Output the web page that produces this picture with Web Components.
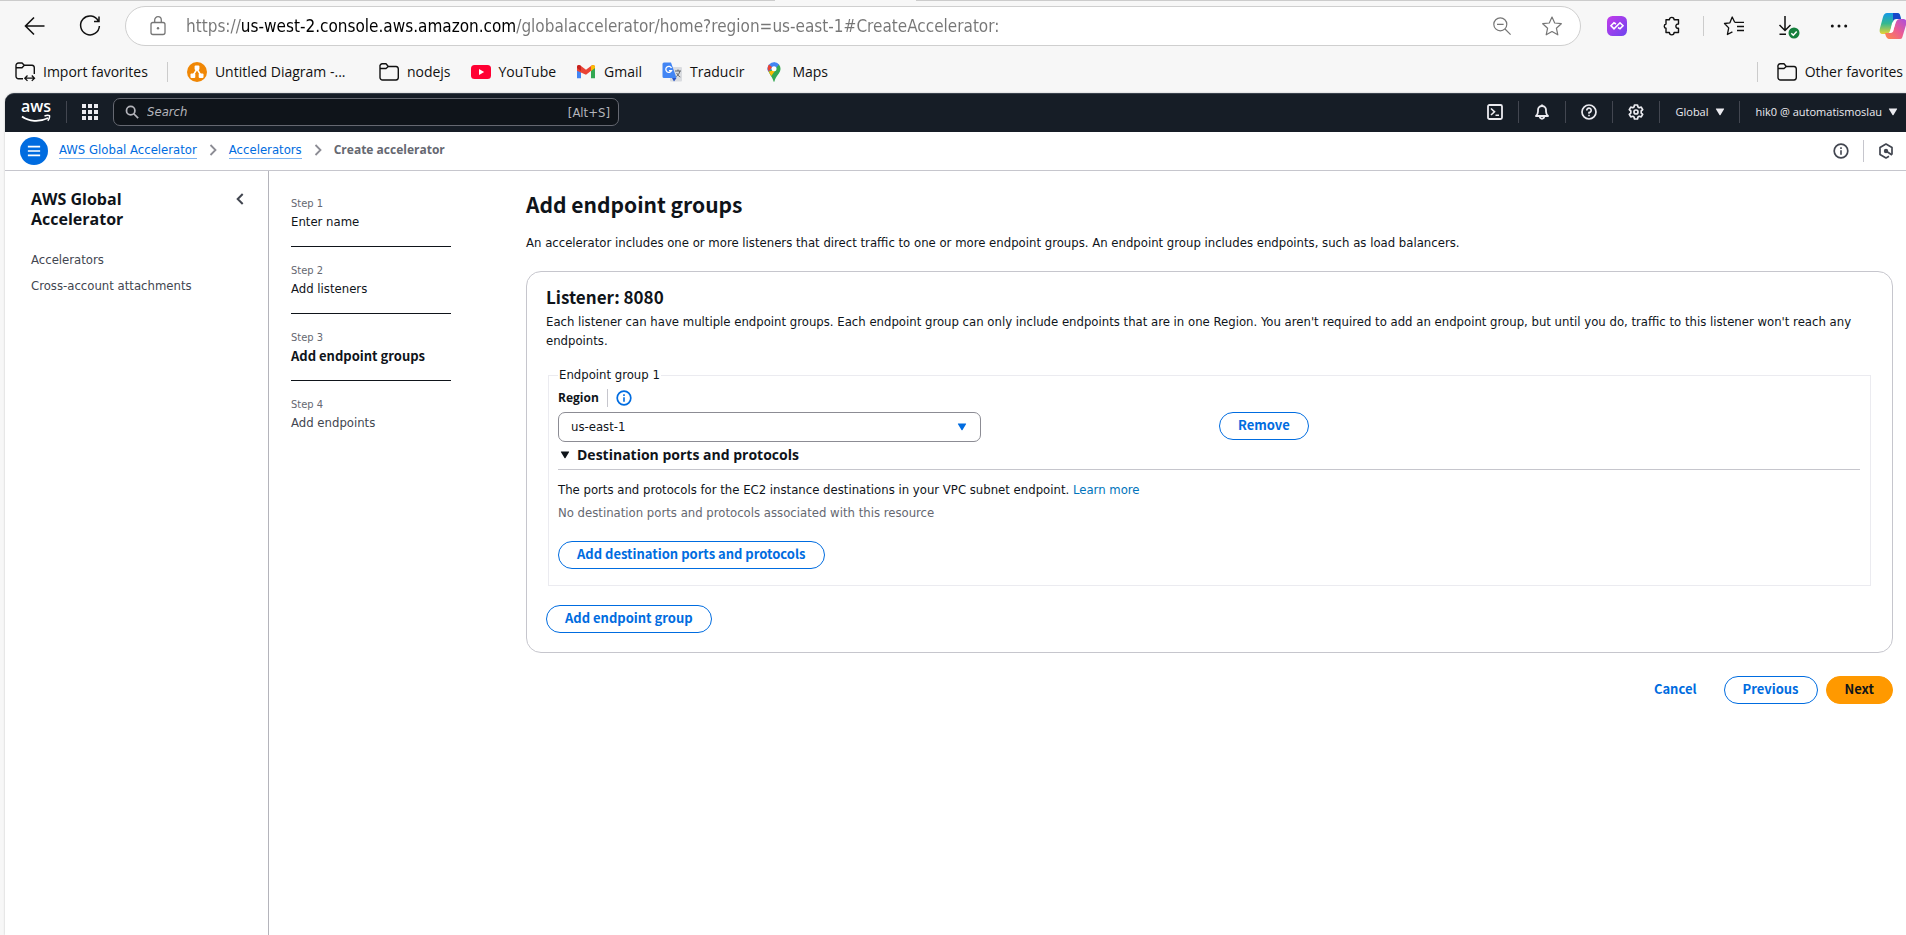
<!DOCTYPE html>
<html lang="en">
<head>
<meta charset="utf-8">
<title>Create accelerator</title>
<style>
  :root {
    --body: "DejaVu Sans Condensed", "Open Sans", sans-serif;
    --bold: "Noto Sans CJK SC", "Open Sans", sans-serif;
    --shell: "Open Sans", "Noto Sans", sans-serif;
    --ink: #0f141a;
    --muted: #656871;
    --soft: #424650;
    --link: #006ce0;
    --line: #c6c6cd;
  }
  html, body { margin: 0; height: 100%; }
  body { background: #f7f7f7; color: var(--ink); font: 13px/19px var(--body); overflow: hidden; }
</style>
</head>
<body>
<aws-app></aws-app>
<script>
const ICONS = {
  back: [24, '<path d="M21.500 12H2.500M11 3.500 2.500 12l8.500 8.500" fill="none" stroke="currentColor" stroke-width="1.600"/>'],
  reload: [24, '<path d="M20.300 7A9.400 9.400 0 1 0 21.400 12M21 2.500V7.500H16" fill="none" stroke="currentColor" stroke-width="1.500"/>'],
  lock: [20, '<rect x="3" y="6.500" width="14" height="12" rx="2" fill="none" stroke="currentColor" stroke-width="1.300"/><path d="M6.700 6.500V4a3.300 3.300 0 0 1 6.600 0v2.500" fill="none" stroke="currentColor" stroke-width="1.300"/><circle cx="10" cy="12.300" r="1.200" fill="currentColor"/>'],
  zoomout: [20, '<circle cx="8.300" cy="8.300" r="6.500" fill="none" stroke="currentColor" stroke-width="1.200"/><path d="M13 13l5.600 5.600M5 8.300h6.600" stroke="currentColor" stroke-width="1.200"/>'],
  star: [20, '<path d="M10 1l2.700 6 6.600.7-4.900 4.500 1.400 6.600L10 15.500l-5.800 3.300 1.400-6.600L.7 7.700 7.300 7z" fill="none" stroke="currentColor" stroke-width="1.200" stroke-linejoin="round"/>'],
  starlist: [20, '<path d="M10.700 6.300 8.200 1 5.900 6.800.5 7.500l4.200 4.400-1.300 6.600 5-2.600M10.700 6.300H20M13 10.500h7M13 14.500h7" fill="none" stroke="currentColor" stroke-width="1.300" stroke-linejoin="round"/>'],
  ext: [20, '<defs><linearGradient id="p" x1="0" y1="0" x2="1" y2="1"><stop offset="0" stop-color="#c43bea"/><stop offset="1" stop-color="#6d45ef"/></linearGradient></defs><rect width="20" height="20" rx="5.500" fill="url(#p)"/><path d="M9 8 7 6.800 4 9.800 7 12.800 13 6.800 16 9.800 13 12.800 11 11.500" fill="none" stroke="#fff" stroke-width="1.600"/>'],
  puzzle: [20, '<path d="M4 3.700h3.400a2.300 2.300 0 0 1 4.700 0H16.500V8c-3.200-.6-3.800 4.600 0 4.300v4.200h-4.400a2.300 2.300 0 0 1-4.700 0H4v-4.200a2.200 2.200 0 0 1 0-4.300z" fill="none" stroke="currentColor" stroke-width="1.400" stroke-linejoin="round"/>'],
  download: [24, '<path d="M9 2v14.500M3.500 11 9 16.500l5.500-5.500M3.500 20.300H10" fill="none" stroke="currentColor" stroke-width="1.500"/><circle cx="18" cy="19" r="5.500" fill="#15803d"/><path d="m15.300 19.200 2 2 3.400-3.800" fill="none" stroke="#fff" stroke-width="1.500"/>'],
  dots: [20, '<g fill="currentColor"><circle cx="3.300" cy="10" r="1.500"/><circle cx="10" cy="10" r="1.500"/><circle cx="16.700" cy="10" r="1.500"/></g>'],
  copilot: [28, '<defs><linearGradient id="a" x1="0" y1="0" x2="0" y2="1"><stop offset="0" stop-color="#1398e8"/><stop offset=".5" stop-color="#35b890"/><stop offset="1" stop-color="#e9d335"/></linearGradient><linearGradient id="b" x1="1" y1="0" x2="0" y2="1"><stop offset="0" stop-color="#a94de0"/><stop offset=".5" stop-color="#ec5d92"/><stop offset="1" stop-color="#ff8a45"/></linearGradient></defs><path d="M8 1h10c3 0 3 2 4 6h-5c-3 0-3 3-4 6l-2 6c-1 2-2 3-4 3H4c-3 0-4-2-3-6l3-11c1-3 2-4 4-4z" fill="url(#a)"/><path d="M14 1h4c3 0 3 2 4 6h-5c-2 0-3 1-3 3z" fill="#1747c9"/><path d="M21 27H11c-3 0-4-2-5-6h5c2 0 3-1 4-5l2-6c1-2 2-3 4-3h3c3 0 4 2 3 6l-3 10c-1 3-1 4-3 4z" fill="url(#b)"/><path d="m13 11 4-3-3 12-3 1z" fill="#fff"/>'],
  folder: [20, '<path d="M1 5A2.500 2.500 0 0 1 3.500 1.800H7L9.300 4.500H17A2.500 2.500 0 0 1 19.300 7V15.500A2.500 2.500 0 0 1 17 18H3.500A2.500 2.500 0 0 1 1 15.500zM1 6.500H7L9.300 4.500" fill="none" stroke="currentColor" stroke-width="1.400" stroke-linejoin="round"/>'],
  importfolder: [20, '<path d="M8 16.700H3.500A2.500 2.500 0 0 1 1 14.200V3.500A2.500 2.500 0 0 1 3.500 1H7L9.300 3.300H17A2.500 2.500 0 0 1 19.300 5.800V12M1 5.700H7L9.300 3.300" fill="none" stroke="currentColor" stroke-width="1.400"/><path d="M10 16.200h9.300M12.500 13.500 9.800 16.200l2.700 2.700M16.800 13.500l2.700 2.700-2.700 2.700" fill="none" stroke="currentColor" stroke-width="1.300"/>'],
  drawio: [20, '<circle cx="10" cy="10" r="10" fill="#f08705"/><path d="M10 7 6.300 13M10 7l3.700 6" stroke="#fff" stroke-width="1.500"/><g fill="#fff"><rect x="7.600" y="3.500" width="4.800" height="4.500" rx="1"/><rect x="3.500" y="11.500" width="4.800" height="4.500" rx="1"/><rect x="11.700" y="11.500" width="4.800" height="4.500" rx="1"/></g>'],
  youtube: [20, '<rect y="3" width="20" height="14" rx="3.500" fill="#f03"/><path d="m8 7 5.200 3L8 13z" fill="#fff"/>'],
  gmail: [20, '<path d="M1 5v11.200h4V8z" fill="#4285f4"/><path d="M15 8v8.200h4V5z" fill="#34a853"/><path d="M1 8.800V5c0-2 2-2.600 3.400-1.500L10 7.700l5.600-4.200C17 2.400 19 3 19 5v.8l-9 6.900z" fill="#ea4335"/><path d="M15 9V4l.6-.5C17 2.400 19 3 19 5v.9z" fill="#fbbc04"/><path d="M1 5.900 5 9V4C3 2 1 3 1 5z" fill="#c5221f"/>'],
  translate: [20, '<rect x="8" y="5" width="12" height="14.500" rx="1" fill="#dadce0"/><path d="M2 .5h7L14.500 16H2A1.500 1.500 0 0 1 .5 14.500V2A1.500 1.500 0 0 1 2 .5z" fill="#4285f4"/><path d="M10 16h4.500L12 19.500z" fill="#2a56c6"/><path d="M9.500 6A3 3 0 1 0 9.500 8.700H7" fill="none" stroke="#fff" stroke-width="1.300"/><path d="M13 9h6M16 7.500V9M17.800 9c-.5 3-2 4.500-3.500 5.500M14.700 11c.8 2 2 3 3.600 4" fill="none" stroke="#5f6368"/>'],
  maps: [20, '<path d="M10 .3a6.500 6.500 0 0 1 5 2.300L6.700 12C4 9.500 3.300 8 3.300 6.700A6.700 6.700 0 0 1 10 .3z" fill="#4285f4"/><path d="M4.900 2.500 8.200 5.200 4.600 9.400A6.500 6.500 0 0 1 4.900 2.500z" fill="#ea4335"/><path d="M4.600 9.400 15 2.600c2.200 3 2 6-.2 9C12.300 14.700 11 17 10.500 19.300c-.2.700-.8.700-1 0-.8-3.800-3-5.300-4.900-9.900z" fill="#34a853"/><path d="m4.600 9.400 7-1.400-4.300 6z" fill="#fbbc04"/><path d="m10 .3 5 2.300-4 4.600-3-2z" fill="#4285f4"/><circle cx="10" cy="6.700" r="2.500" fill="#fff"/>'],
  grid: [16, '<path d="M0 0h4v4H0zM6 0h4v4H6zM12 0h4v4h-4zM0 6h4v4H0zM6 6h4v4H6zM12 6h4v4h-4zM0 12h4v4H0zM6 12h4v4H6zM12 12h4v4h-4z" fill="currentColor"/>'],
  search: [16, '<circle cx="6.500" cy="6.500" r="4.800" fill="none" stroke="currentColor" stroke-width="2"/><path d="m10 10 5 5" stroke="currentColor" stroke-width="2"/>'],
  terminal: [16, '<rect x="1" y="1" width="14" height="14" rx="1.500" fill="none" stroke="currentColor" stroke-width="1.800"/><path d="m4 4.500 3.500 3.300L4 11M8.500 11.300H12" fill="none" stroke="currentColor" stroke-width="1.600"/>'],
  bell: [16, '<path d="M2 12h12c-1.500-1.500-2-2.500-2-4.500V6A4 4 0 0 0 4 6v1.500C4 9.500 3.500 10.500 2 12zM8 2V.5M5.700 12.500c.3 3 4.300 3 4.600 0" fill="none" stroke="currentColor" stroke-width="1.800" stroke-linejoin="round"/>'],
  help: [16, '<circle cx="8" cy="8" r="7" fill="none" stroke="currentColor" stroke-width="1.700"/><path d="M5.800 6.500A2.200 2.200 0 1 1 8 8.500v1.200M8 10.700v1.600" fill="none" stroke="currentColor" stroke-width="1.600"/>'],
  gear: [16, '<path d="M6.500 1h3l.5 2 1.200.7 2-.6 1.500 2.600L13.200 7v2l1.500 1.300-1.500 2.600-2-.6-1.200.7-.5 2h-3L6 13l-1.200-.7-2 .6-1.500-2.600L2.800 9V7L1.300 5.700l1.500-2.600 2 .6L6 3z" fill="none" stroke="currentColor" stroke-width="1.700" stroke-linejoin="round"/><circle cx="8" cy="8" r="2" fill="none" stroke="currentColor" stroke-width="1.700"/>'],
  caret: [10, '<path d="M1.400 1.500h7.200c.5 0 .7.400.4.800L5.500 7.900c-.3.400-.7.400-1 0L1 2.300c-.3-.4-.1-.8.400-.8z" fill="currentColor"/>'],
  info: [16, '<circle cx="8" cy="8" r="6.800" fill="none" stroke="currentColor" stroke-width="1.700"/><path d="M8 7.200v4.600M8 4.200v1.700" stroke="currentColor" stroke-width="1.600"/>'],
  hex: [16, '<path d="M11 13.300 8 15l-6-3.500v-7L8 1l6 3.500v7" fill="none" stroke="currentColor" stroke-width="1.700" stroke-linejoin="round"/><circle cx="8" cy="8" r="2.200" fill="currentColor"/><path d="m8 8 6 4" stroke="currentColor" stroke-width="1.800"/>'],
  menu: [16, '<path d="M1 3h14M1 8h14M1 13h14" stroke="currentColor" stroke-width="1.800"/>'],
  right: [12, '<path d="m3.500 1 5 5-5 5" fill="none" stroke="currentColor" stroke-width="1.800"/>'],
  left: [12, '<path d="m8.700 1-5 5 5 5" fill="none" stroke="currentColor" stroke-width="2"/>']
};

function define(name, html, setup) {
  const template = document.createElement('template');
  template.innerHTML = html;
  customElements.define(name, class extends HTMLElement {
    connectedCallback() {
      if (this.shadowRoot) return;
      const root = this.attachShadow({ mode: 'open' });
      root.append(template.content.cloneNode(true));
      if (setup) setup(this, root);
    }
  });
}

define('ui-icon', `<style>:host{display:inline-flex;flex:none}svg{display:block;overflow:visible}</style>`, (el, root) => {
  const [box, art] = ICONS[el.getAttribute('name')];
  const size = el.getAttribute('size') || box;
  root.innerHTML += `<svg aria-hidden="true" width="${size}" height="${size}" viewBox="0 0 ${box} ${box}">${art}</svg>`;
});

define('icon-button', `<style>
  :host{display:inline-flex;flex:none}
  button{display:flex;align-items:center;justify-content:center;padding:0;border:0;background:none;color:inherit;width:100%}
  </style><button type="button"><slot></slot></button>`, (el, root) => {
  root.querySelector('button').setAttribute('aria-label', el.getAttribute('label'));
});

define('address-bar', `<style>
  :host{display:flex;align-items:center;flex:1;box-sizing:border-box;height:40px;border:1px solid #cfcfcf;border-radius:20px;background:#fff;padding:0 18px 0 22px;color:#767676}
  input{flex:1;min-width:0;border:0;outline:0;padding:0;margin-left:18px;height:32px;font:17px/32px var(--body);
    color:transparent;-webkit-background-clip:text;background-clip:text;
    background-image:linear-gradient(90deg,#767676 var(--from),#000 var(--from),#000 var(--to),#767676 var(--to))}
  .end{display:flex;gap:30px}
  </style>
  <ui-icon name="lock"></ui-icon>
  <input type="text" aria-label="Address" value="https://us-west-2.console.aws.amazon.com/globalaccelerator/home?region=us-east-1#CreateAccelerator:">
  <div class="end"><icon-button label="Zoom out"><ui-icon name="zoomout"></ui-icon></icon-button><icon-button label="Add to favorites"><ui-icon name="star"></ui-icon></icon-button></div>`, (el, root) => {
  const input = root.querySelector('input');
  const pen = document.createElement('canvas').getContext('2d');
  pen.font = '17px "DejaVu Sans Condensed", "Open Sans", sans-serif';
  const scheme = 'https://';
  const host = scheme + new URL(input.value).host;
  input.style.setProperty('--from', Math.round(pen.measureText(scheme).width) + 'px');
  input.style.setProperty('--to', Math.round(pen.measureText(host).width) + 'px');
});

define('bookmark-link', `<style>
  :host{display:inline-flex;flex:none}
  a{display:flex;align-items:center;gap:8px;color:#111;text-decoration:none;font:14px/20px var(--shell);white-space:nowrap}
  span{min-width:var(--label,0)}
  </style><a href="#"><span><slot></slot></span></a>`, (el, root) => {
  const icon = document.createElement('ui-icon');
  icon.setAttribute('name', el.getAttribute('icon'));
  root.querySelector('a').prepend(icon);
});

define('browser-chrome', `<style>
  :host{display:block;background:#f7f7f7;color:#111}
  .edge{display:flex;height:1px}
  .edge i{background:#ccc;width:775px}.edge i:last-child{flex:1}.edge b{width:141px}
  .bar{display:flex;align-items:center;height:50px;overflow:hidden}
  .start{display:flex;gap:31px;padding:0 23px 0 23px}
  .tools{display:flex;align-items:center;flex:none;padding-left:26px;margin-right:-1px}
  .rule{width:1px;height:20px;background:#ccc;flex:none}
  .favs{display:flex;align-items:center;height:42px;padding:0 3px 0 15px;gap:20px}
  .favs .rule{margin:0 -1px}
  .favs .push{margin-left:auto}
  .puzzle{margin:0 21px 0 35px}
  .favorites{margin:0 32px 0 20px}
  .more{margin:0 30px 0 29px}
  .wide{--label:144px}
  </style>
  <div class="edge"><i></i><b></b><i></i></div>
  <div class="bar">
    <div class="start"><icon-button label="Back"><ui-icon name="back"></ui-icon></icon-button><icon-button label="Refresh"><ui-icon name="reload"></ui-icon></icon-button></div>
    <address-bar></address-bar>
    <div class="tools">
      <icon-button label="Extension"><ui-icon name="ext"></ui-icon></icon-button>
      <icon-button class="puzzle" label="Extensions"><ui-icon name="puzzle"></ui-icon></icon-button>
      <span class="rule"></span>
      <icon-button class="favorites" label="Favorites"><ui-icon name="starlist"></ui-icon></icon-button>
      <icon-button label="Downloads"><ui-icon name="download"></ui-icon></icon-button>
      <icon-button class="more" label="Settings and more"><ui-icon name="dots"></ui-icon></icon-button>
      <icon-button label="Copilot"><ui-icon name="copilot"></ui-icon></icon-button>
    </div>
  </div>
  <div class="favs">
    <bookmark-link icon="importfolder">Import favorites</bookmark-link>
    <span class="rule"></span>
    <bookmark-link icon="drawio" class="wide">Untitled Diagram -...</bookmark-link>
    <bookmark-link icon="folder">nodejs</bookmark-link>
    <bookmark-link icon="youtube">YouTube</bookmark-link>
    <bookmark-link icon="gmail">Gmail</bookmark-link>
    <bookmark-link icon="translate">Traducir</bookmark-link>
    <bookmark-link icon="maps">Maps</bookmark-link>
    <span class="rule push"></span>
    <bookmark-link icon="folder">Other favorites</bookmark-link>
  </div>`);

define('aws-logo', `<style>
  :host{display:block;width:30px;color:#fff;font:600 16px/10px var(--shell);text-align:center}
  svg{display:block;margin-top:3px}
  </style>aws<svg width="30" height="9" viewBox="0 0 30 9" aria-hidden="true"><path d="M1 2.500c7 5 17 6 26 1.500" fill="none" stroke="currentColor" stroke-width="1.800"/><path d="M23.500 2c2-.8 4-.8 5-.3.300 1.500-.5 3.500-1.700 5" fill="none" stroke="currentColor" stroke-width="1.500"/></svg>`);

define('console-nav', `<style>
  :host{display:flex;align-items:center;box-sizing:border-box;height:39px;padding:0 8px 2px 16px;background:#161d26;border-top:1px solid #3a424d;border-top-left-radius:9px;color:#ebebf0}
  .rule{width:1px;height:22px;background:#424650;flex:none}
  .apps{margin:0 15px}
  .logo{margin-right:15px}
  label{display:flex;align-items:center;box-sizing:border-box;width:506px;height:28px;padding:0 8px 0 11px;gap:8px;border:1px solid #656871;border-radius:7px;background:#0f141a;color:#b4b4bb}
  input{flex:1;min-width:0;padding:0;border:0;outline:0;background:none;color:inherit;font:italic 13px/20px var(--body)}
  input::placeholder{color:#b4b4bb}
  .end{display:flex;align-items:center;margin-left:auto}
  .cell{width:46px}
  .menu{display:flex;align-items:center;gap:6px;padding:0;border:0;background:none;color:inherit;font:500 11px/16px var(--shell);margin-left:16px}
  .region{margin-right:14px}
  </style>
  <aws-logo class="logo"></aws-logo><span class="rule"></span>
  <icon-button class="apps" label="Services"><ui-icon name="grid"></ui-icon></icon-button>
  <label><ui-icon name="search" size="14"></ui-icon><input type="search" placeholder="Search" aria-label="Search">[Alt+S]</label>
  <div class="end">
    <icon-button class="cell" label="CloudShell"><ui-icon name="terminal"></ui-icon></icon-button><span class="rule"></span>
    <icon-button class="cell" label="Notifications"><ui-icon name="bell"></ui-icon></icon-button><span class="rule"></span>
    <icon-button class="cell" label="Help"><ui-icon name="help"></ui-icon></icon-button><span class="rule"></span>
    <icon-button class="cell" label="Settings"><ui-icon name="gear"></ui-icon></icon-button><span class="rule"></span>
    <button type="button" class="menu region">Global<ui-icon name="caret"></ui-icon></button><span class="rule"></span>
    <button type="button" class="menu">hik0 @ automatismoslau<ui-icon name="caret"></ui-icon></button>
  </div>`);

define('crumb-bar', `<style>
  :host{display:flex;align-items:center;box-sizing:border-box;height:39px;padding:0 12px 0 15px;background:#fff;border-bottom:1px solid var(--line);color:#424650}
  .menu{width:28px;height:28px;border-radius:50%;background:var(--link);color:#fff;margin-right:11px;justify-content:center}
  nav{display:flex;align-items:center;gap:10px;padding-bottom:2px;color:#8c8c94}
  a{color:var(--link);text-decoration:none;border-bottom:1px solid #7db4f0;line-height:16px}
  b{font:700 12px/18px var(--shell);color:var(--muted)}
  .end{display:flex;align-items:center;gap:14px;margin-left:auto}
  .rule{width:1px;height:22px;background:var(--line)}
  </style>
  <icon-button class="menu" label="Open navigation"><ui-icon name="menu" size="14"></ui-icon></icon-button>
  <nav aria-label="Breadcrumbs"><a href="#">AWS Global Accelerator</a><ui-icon name="right"></ui-icon><a href="#">Accelerators</a><ui-icon name="right"></ui-icon><b>Create accelerator</b></nav>
  <div class="end"><icon-button label="Info"><ui-icon name="info"></ui-icon></icon-button><span class="rule"></span><icon-button label="Amazon Q"><ui-icon name="hex"></ui-icon></icon-button></div>`);

define('side-nav', `<style>
  :host{display:block;box-sizing:border-box;flex:0 0 264px;border-right:1px solid #b4b4bb;padding:18px 22px 0 26px}
  header{display:flex;justify-content:space-between;color:#424650}
  header icon-button{height:20px}
  h2{margin:0;width:140px;font:700 16px/20px var(--shell);color:var(--ink)}
  a{display:block;color:var(--soft);text-decoration:none;line-height:18px}
  nav{display:grid;gap:8px;margin-top:22px}
  </style>
  <header><h2>AWS Global Accelerator</h2><icon-button label="Close navigation"><ui-icon name="left"></ui-icon></icon-button></header>
  <nav><a href="#">Accelerators</a><a href="#">Cross-account attachments</a></nav>`);

define('wizard-step', `<style>
  :host{display:block;border-bottom:1px solid var(--ink);padding-bottom:15px}
  :host(:last-child){border:0;color:var(--soft)}
  :host([current]) div{font:700 13px/18px var(--bold)}
  small{display:block;font-size:11px;line-height:18px;color:var(--muted)}
  div{line-height:18px}
  </style><small></small><div><slot></slot></div>`, (el, root) => {
  root.querySelector('small').textContent = 'Step ' + el.getAttribute('step');
});

define('ui-button', `<style>
  :host{display:inline-block;vertical-align:top}
  button{display:block;box-sizing:border-box;height:28px;padding:0 18px 2px;border:1px solid var(--link);border-radius:14px;background:#fff;color:var(--link);font:700 13px/24px var(--bold)}
  :host([kind=link]) button{border-color:transparent;background:none}
  :host([kind=primary]) button{border-color:#f90;background:#f90;color:var(--ink)}
  </style><button type="button"><slot></slot></button>`);

define('endpoint-group', `<style>
  :host{display:block}
  fieldset{margin:0 2px;min-width:0;padding:5px 10px 16px 9px;border:1px solid #ebebf0}
  legend{padding:0 1px;margin:0;line-height:18px}
  .row{display:grid;grid-template-columns:1fr 1fr;column-gap:20px;align-items:end}
  .label{display:flex;align-items:center;height:18px;gap:8px;margin-bottom:5px}
  label{font:700 12px/18px var(--shell)}
  .rule{width:1px;height:18px;background:var(--line)}
  .info{color:var(--link)}
  .pick{display:grid;grid-template-columns:1fr;align-items:center;width:66%}
  .pick>*{grid-area:1/1}
  .pick ui-icon{justify-self:end;margin-right:14px;color:var(--link);pointer-events:none}
  select{appearance:none;box-sizing:border-box;width:100%;height:30px;padding:0 12px 2px;border:1px solid #8c8c94;border-radius:7px;background:#fff;color:var(--ink);font:13px/19px var(--body)}
  h3{display:flex;align-items:center;gap:7px;margin:0;padding:3px 0 4px 2px;border-bottom:1px solid var(--line);font:700 14px/20px var(--shell)}
  p{margin:0}
  a{color:#0073bb;text-decoration:none}
  .none{color:var(--muted);margin:4px 0 19px}
  .top{margin-top:10px}
  .drop{margin-bottom:2px}
  </style>
  <fieldset><legend>Endpoint group 1</legend>
    <div class="row">
      <div><div class="label"><label for="region">Region</label><span class="rule"></span><icon-button class="info" label="Region info"><ui-icon name="info"></ui-icon></icon-button></div>
        <div class="pick"><select id="region"><option>us-east-1</option></select><ui-icon name="caret"></ui-icon></div></div>
      <ui-button class="drop">Remove</ui-button>
    </div>
    <h3><ui-icon name="caret"></ui-icon>Destination ports and protocols</h3>
    <p class="top">The ports and protocols for the EC2 instance destinations in your VPC subnet endpoint. <a href="#">Learn more</a></p>
    <p class="none">No destination ports and protocols associated with this resource</p>
    <ui-button>Add destination ports and protocols</ui-button>
  </fieldset>`);

define('listener-card', `<style>
  :host{display:block;box-sizing:border-box;border:1px solid var(--line);border-radius:15px;padding:13px 19px 19px}
  h2{margin:0;font:700 17px/24px var(--bold)}
  p{margin:3px 0 16px;line-height:19px}
  endpoint-group{margin-bottom:19px}
  </style>
  <h2>Listener: 8080</h2>
  <p>Each listener can have multiple endpoint groups. Each endpoint group can only include endpoints that are in one Region. You aren't required to add an endpoint group, but until you do, traffic to this listener won't reach any endpoints.</p>
  <endpoint-group></endpoint-group>
  <ui-button>Add endpoint group</ui-button>`);

define('wizard-page', `<style>
  :host{display:flex;flex:1;min-width:0;padding:0 13px 0 22px;gap:75px}
  aside{flex:0 0 160px;display:flex;flex-direction:column;gap:15px;padding-top:24px}
  main{flex:1;min-width:0;padding-top:19px}
  h1{margin:0 0 15px;font:700 21px/28px var(--bold)}
  p{margin:0 0 19px}
  footer{display:flex;justify-content:flex-end;gap:8px;margin-top:23px}
  </style>
  <aside><wizard-step step="1">Enter name</wizard-step><wizard-step step="2">Add listeners</wizard-step><wizard-step step="3" current>Add endpoint groups</wizard-step><wizard-step step="4">Add endpoints</wizard-step></aside>
  <main>
    <h1>Add endpoint groups</h1>
    <p>An accelerator includes one or more listeners that direct traffic to one or more endpoint groups. An endpoint group includes endpoints, such as load balancers.</p>
    <listener-card></listener-card>
    <footer><ui-button kind="link">Cancel</ui-button><ui-button>Previous</ui-button><ui-button kind="primary">Next</ui-button></footer>
  </main>`);

define('aws-app', `<style>
  :host{display:flex;flex-direction:column;min-height:100vh}
  .window{display:flex;flex-direction:column;flex:1;margin-left:5px;background:#fff;border-top-left-radius:9px;box-shadow:0 0 2px #bbb}
  .content{display:flex;flex:1}
  </style>
  <browser-chrome></browser-chrome>
  <div class="window"><console-nav></console-nav><crumb-bar></crumb-bar><div class="content"><side-nav></side-nav><wizard-page></wizard-page></div></div>`);
</script>
</body>
</html>
